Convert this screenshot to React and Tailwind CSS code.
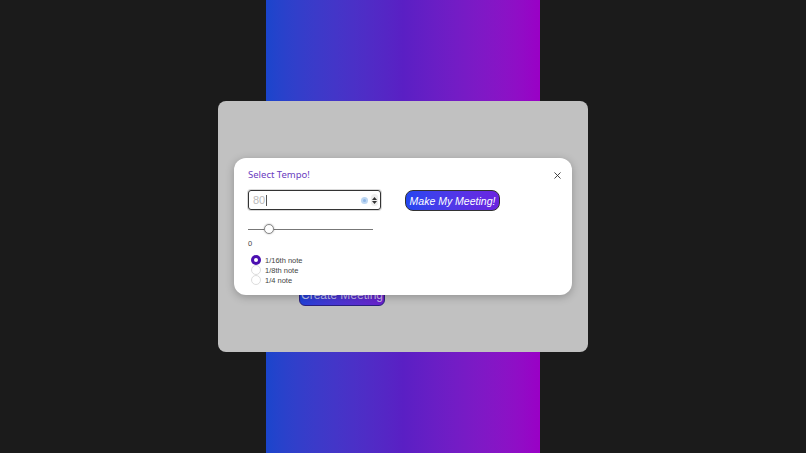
import { X } from 'lucide-react'

const NOTES = ['1/16th note', '1/8th note', '1/4 note']

export default function App() {
  return (
    <div className="relative w-[806px] h-[453px] bg-[#1b1b1b] flex justify-center overflow-hidden font-['Liberation_Sans',Arial,sans-serif]">
      <div className="w-[274px] h-full bg-gradient-to-r from-[#1a45cc] via-[#5a1fc4] to-[#9a00c6]" />

      {/* gray backdrop panel */}
      <div className="absolute left-[218px] top-[101px] w-[370px] h-[251px] rounded-lg bg-[#c1c1c1]">
        <div className="pt-[181px] pl-[81px]">
          <button className="w-[86px] h-[21px] rounded-md border border-[#2a2080] bg-gradient-to-r from-[#1e40d8] to-[#6a1fcc] text-[12px] text-white/70 whitespace-nowrap leading-none">
            Create Meeting
          </button>
        </div>
      </div>

      {/* dialog */}
      <div className="absolute left-[234px] top-[158px] w-[338px] h-[137px] rounded-xl bg-white shadow-[0_2px_8px_rgba(0,0,0,0.25)] px-[14px] pt-[10px]">
        <div className="flex items-center justify-between">
          <p className="text-[9.5px] text-[#6a3cc0] font-['Noto_Sans',sans-serif]">Select Tempo!</p>
          <X size={11} strokeWidth={2} className="text-[#333] mr-[-5px]" />
        </div>

        <div className="flex items-start gap-[24px] mt-[8px]">
          <div className="flex flex-col">
            <div className="w-[133px] h-[20px] rounded-[3px] border border-[#333] flex items-center pl-[4px] pr-[2px] shadow-[0_0_0_1px_rgba(0,0,0,0.15)]">
              <span className="text-[11px] text-[#bbb] leading-none">80</span>
              <span className="w-[1px] h-[11px] bg-[#555] ml-[1px]" />
              <span className="ml-auto w-[7px] h-[7px] rounded-full bg-[#bcd6f2] flex items-center justify-center">
                <span className="w-[3px] h-[3px] rounded-full bg-[#8fb6e6]" />
              </span>
              <span className="ml-[3px] w-[7px] h-[12px] rounded-sm bg-[#eee] flex flex-col items-center justify-center gap-[1px]">
                <svg width="5" height="3" viewBox="0 0 5 3"><path d="M0 3 L2.5 0 L5 3Z" fill="#333" /></svg>
                <svg width="5" height="3" viewBox="0 0 5 3"><path d="M0 0 L2.5 3 L5 0Z" fill="#333" /></svg>
              </span>
            </div>

            <div className="relative w-[125px] h-[12px] mt-[13px] flex items-center">
              <div className="w-full h-[1px] bg-[#777]" />
              <span className="absolute left-[16px] top-[1px] w-[10px] h-[10px] rounded-full bg-white border border-[#888] shadow-[0_0_2px_rgba(0,0,0,0.3)]" />
            </div>

            <p className="text-[7.5px] text-[#444] mt-[4px] leading-[10px]">0</p>

            <div className="flex flex-col mt-[6px] ml-[3px]">
              {NOTES.map((n, i) => (
                <label key={n} className="flex items-center gap-[4px] h-[10px]">
                  {i === 0 ? (
                    <span className="w-[10px] h-[10px] rounded-full bg-[#4b0fb0] flex items-center justify-center">
                      <span className="w-[4px] h-[4px] rounded-full bg-white" />
                    </span>
                  ) : (
                    <span className="w-[10px] h-[10px] rounded-full border border-[#ddd] bg-white" />
                  )}
                  <span className="text-[7.5px] text-[#444] leading-none">{n}</span>
                </label>
              ))}
            </div>
          </div>

          <button className="w-[95px] h-[21px] rounded-lg border border-[#333] bg-gradient-to-r from-[#2246f0] to-[#6a22e0] text-white italic text-[10.5px] leading-none whitespace-nowrap">
            Make My Meeting!
          </button>
        </div>
      </div>
    </div>
  )
}
